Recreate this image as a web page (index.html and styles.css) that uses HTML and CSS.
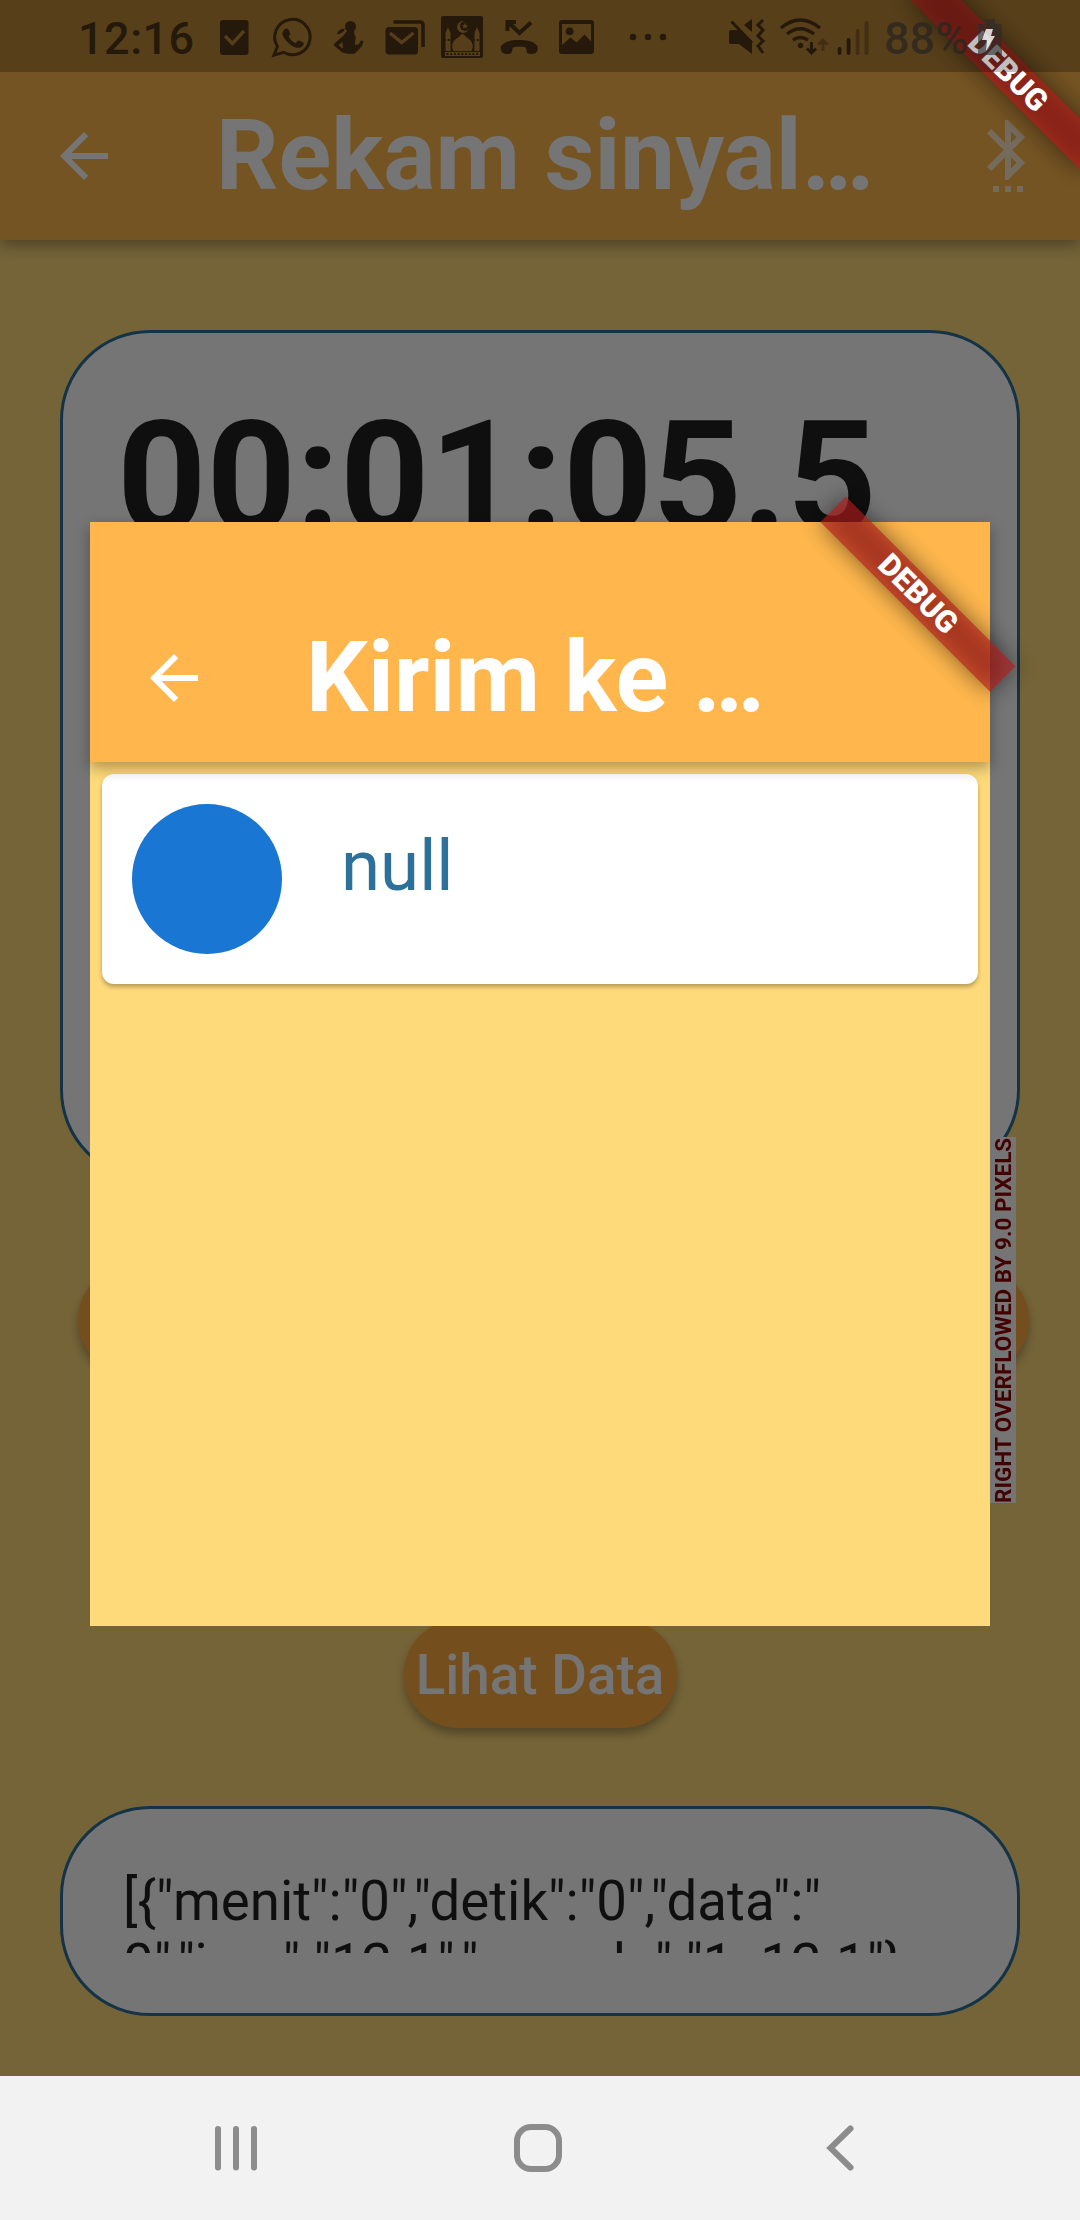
FILE: index.html
```html
<!DOCTYPE html>
<html lang="id">
<head>
<meta charset="utf-8">
<title>Rekam sinyal</title>
<link rel="stylesheet" href="styles.css">
</head>
<body>
<div class="phone">
  <main class="screen">
    <header class="appbar">
      <svg class="icon" viewBox="0 0 24 24"><path d="M20 11H7.83l5.59-5.59L12 4l-8 8 8 8 1.41-1.41L7.83 13H20v-2z"/></svg>
      <h1 class="title">Rekam sinyal…</h1>
      <svg class="icon icon-bt" viewBox="0 0 24 24"><path d="M11 24h2v-2h-2v2zm-4 0h2v-2H7v2zm8 0h2v-2h-2v2zm2.71-18.29L12 0h-1v7.59L6.41 3 5 4.41 10.59 10 5 15.59 6.41 17 11 12.41V20h1l5.71-5.71-4.3-4.29 4.3-4.29zM13 3.83l1.88 1.88L13 7.59V3.83zm1.88 10.46L13 16.17v-3.76l1.88 1.88z"/></svg>
    </header>
    <div class="content">
      <section class="panel timer">00:01:05.5</section>
      <div class="actions"><span class="pill side"></span><span class="pill side"></span></div>
      <button class="pill view">Lihat Data</button>
      <section class="panel log"><div class="log-text">[{"menit":"0","detik":"0","data":"<br>0","jam":"12.1","sample":"1: 12.1"}</div></section>
    </div>
    <div class="overflow">RIGHT OVERFLOWED BY 9.0 PIXELS</div>
    <div class="scrim"></div>

    <div class="dialog">
      <header class="dialog-bar">
        <svg class="icon" viewBox="0 0 24 24"><path d="M20 11H7.83l5.59-5.59L12 4l-8 8 8 8 1.41-1.41L7.83 13H20v-2z"/></svg>
        <h2 class="title">Kirim ke …</h2>
      </header>
      <div class="item"><span class="avatar"></span><span class="name">null</span></div>
      <div class="banner">DEBUG</div>
    </div>
    <div class="banner">DEBUG</div>

    <div class="status">
      <span class="clock">12:16</span>
      <svg width="50" height="72" viewBox="210 0 50 72"><rect x="220" y="20" width="28.500" height="35" rx="3"/><path class="cut" d="M225 36l7.500 7.500L244 31"/></svg>
      <svg width="63" height="72" viewBox="260 0 63 72"><path class="line" stroke-width="3" d="M277.500 46.500A17.700 17.700 0 1 1 283.500 52.300L274 55.200Z"/><path d="M284.500 29.500c2-1.800 3.800-.8 4.300.8l1.200 3c.3 1-.2 1.800-1.500 3.300 1.500 3 4 5.300 7.300 6.600 1.700-2.200 2.200-3 3.200-2.600l4.200 2c1 .6.500 2.200-.4 3.400-3 3-7.500 2.200-12-1-4-3-7.300-7-8.300-10.500-.4-2 .6-4 2-5z"/></svg>
      <svg width="52" height="72" viewBox="323 0 52 72"><circle cx="350.500" cy="26.500" r="5.500"/><path d="M347 31l7-1 .5 5c1.500 1.500 1.500 4 .5 7v3c3 0 5-1.500 5.500-4 .3-1 3-.8 2.800 1-1 5-5 8-8 11-1 1-3 1-5 .8-6 0-8-1-10-3l-6-5c-.8-.7-.8-1.400 0-2l9-8z"/><path d="M337 34q1-5 8-5.500-2 5.500-8 5.500z"/><path class="hole" d="M338.500 45l4-3 .5 7z"/></svg>
      <svg width="58" height="72" viewBox="375 0 58 72"><rect x="385.500" y="27" width="32.500" height="27.500" rx="3.500"/><path class="cut" d="M390 33l11.700 9.500L413.500 33"/><path class="line" stroke-width="3.600" d="M393.500 22H420q3 0 3 3v22"/></svg>
      <svg width="59" height="72" viewBox="433 0 59 72"><rect x="441" y="16" width="42" height="42" rx="2"/><g class="hole"><path d="M453.500 51c-3-6-.5-10.500 4-13l5-4.500 5 4.500c4.500 2.500 7 7 4 13z"/><path d="M445.500 51V33l2.500-6 2.500 6v18zM474.500 51V33l2.500-6 2.500 6v18z"/><path d="M445 52h35v4h-35z"/><path d="M464 21a6 6 0 1 0 4.500 8.500 5 5 0 1 1-4.500-8.500zM465 23l1 2h2l-1.500 1.500.5 2-2-1-2 1 .5-2L462 25h2z"/></g><path class="line" stroke-width="2" stroke-dasharray="2 1.700" d="M446.500 54h32M444 40h8m21 0h8"/></svg>
      <svg width="56" height="72" viewBox="492 0 56 72"><path class="line" stroke-width="4" d="M508 22l11.500 11L531 22.500M507.500 31v-9H516"/><path d="M502 52c-1.500-1-1.500-5-1-6 3-4 9-6 18.300-6s15.200 2 18 6c.7 2 .5 5-1 6.500-2 2-7 1.500-8.500 1-1.300-.6-1.500-5-2-6-4-1.200-9-1.200-13 0-.6 1-.5 5.400-2 6-2.500.9-7 .9-8.800-1.500z"/></svg>
      <svg width="67" height="72" viewBox="548 0 67 72"><path fill-rule="evenodd" d="M562 20h29q3 0 3 3v28q0 3-3 3h-29q-3 0-3-3V23q0-3 3-3zM562 24v21l8.500-7.500 6 5 8-8 6.500 7V24z"/><circle cx="569.700" cy="31.300" r="3.900"/></svg>
      <svg class="dots" width="75" height="72" viewBox="615 0 75 72"><circle cx="633" cy="37" r="3.200"/><circle cx="648" cy="37" r="3.200"/><circle cx="663" cy="37" r="3.200"/></svg>
      <svg width="57" height="72" viewBox="715 0 57 72"><path d="M731 30h8l13 11v13L739 44h-8q-2 0-2-2V32q0-2 2-2zM744 25l8-6v13z"/><path class="line" stroke-width="3" d="M731.500 21.500L752 43M763 20l-5 5 5 5-5 6 5 5-5 5 5 7"/></svg>
      <svg width="60" height="72" viewBox="772 0 60 72"><g class="line" stroke-width="3.400"><path d="M781 28q19-16 39 0M787 34q13-10.500 27 0M793 40q7-5 15 0"/><path stroke-width="3" d="M811.500 42v11M807 48.500l4.500 4.500 4.500-4.500"/><path class="dim" stroke-width="3" d="M823 51V40m-4.500 4.500L823 40l4.500 4.500"/></g><circle cx="800.500" cy="45.500" r="2.700"/></svg>
      <svg width="48" height="72" viewBox="832 0 48 72"><g class="line" stroke-width="3.800" stroke-linecap="round"><path d="M839.500 49v4M848.600 40v13"/><path class="dim" d="M857.600 31v22M866.500 23v30"/></g></svg>
      <span class="percent">88%</span>
      <svg class="battery" width="40" height="72" viewBox="970 0 40 72"><path class="shell" d="M985 19h10v5h7v31h-24V24h7z"/><path class="bolt" d="M986 29h7l-2 7h4l-9 15 1-11h-5z"/></svg>
    </div>
  </main>

  <nav class="navbar">
    <svg width="60" height="144" viewBox="206 2076 60 144"><path d="M218 2129v38.500M236 2129v38.500M254 2129v38.500"/></svg>
    <svg width="60" height="144" viewBox="508 2076 60 144"><rect x="517" y="2127" width="42" height="42" rx="14"/></svg>
    <svg width="60" height="144" viewBox="810 2076 60 144"><path d="M850.500 2128.500l-20 19.500 20 19.500"/></svg>
  </nav>
</div>
</body>
</html>
```
FILE: styles.css
```css
* { box-sizing: border-box; }

body {
  margin: 0;
  font-family: Roboto, "Liberation Sans", sans-serif;
}

.phone {
  width: 1080px;
  height: 2220px;
  display: flex;
  flex-direction: column;
  overflow: hidden;
}

.screen {
  position: relative;
  height: 2076px;
  overflow: hidden;
  background: #ffda7a;
}

.appbar {
  position: relative;
  z-index: 1;
  display: flex;
  align-items: center;
  height: 240px;
  padding: 72px 36px 0 48px;
  background: #ffb74d;
  box-shadow: 0 6px 14px rgba(0, 0, 0, 0.32);
}

.icon {
  width: 72px;
  height: 72px;
  flex: none;
  fill: #fff;
}

.icon-bt {
  margin-left: auto;
  fill: rgba(255, 255, 255, 0.7);
}

.title {
  margin: 0 0 0 96px;
  font-size: 97.6px;
  font-weight: 700;
  line-height: 112px;
  color: #fff;
  white-space: nowrap;
}

.content {
  display: flex;
  flex-direction: column;
  padding: 90px 60px 0;
}

.panel {
  border: 3px solid #2d7099;
  border-radius: 90px;
  background: #fff;
  color: rgba(0, 0, 0, 0.87);
}

.timer {
  height: 850px;
  padding: 53px 54px;
  font-size: 156px;
  font-weight: 700;
  line-height: 183px;
  white-space: nowrap;
}

.actions {
  display: flex;
  justify-content: space-between;
  margin: 86px -9px 0 18px;
}

.pill {
  height: 108px;
  border: 0;
  border-radius: 54px;
  background: #ffaa3f;
  box-shadow: 0 6px 10px rgba(0, 0, 0, 0.3);
}

.side { width: 272px; }

.view {
  align-self: center;
  width: 273px;
  margin-top: 246px;
  padding: 2px 0 0;
  font: 500 54.8px/106px Roboto, "Liberation Sans", sans-serif;
  color: #fff;
  white-space: nowrap;
}

.log {
  height: 210px;
  margin-top: 78px;
  padding: 61px 60px 0;
}

.log-text {
  height: 83px;
  overflow: hidden;
  font-size: 54.6px;
  line-height: 63px;
  white-space: nowrap;
}

.overflow {
  position: absolute;
  left: 990px;
  top: 1137px;
  width: 26px;
  height: 366px;
  background: #fff;
  color: #900000;
  font-size: 22.5px;
  font-weight: 700;
  line-height: 26px;
  white-space: nowrap;
  writing-mode: vertical-rl;
  transform: rotate(180deg);
}

.scrim {
  position: absolute;
  inset: 0;
  z-index: 2;
  background: rgba(0, 0, 0, 0.54);
}

.dialog {
  position: absolute;
  z-index: 3;
  left: 90px;
  top: 522px;
  width: 900px;
  height: 1104px;
  background: #ffda7a;
}

.dialog-bar {
  position: relative;
  z-index: 1;
  display: flex;
  align-items: center;
  height: 240px;
  padding: 72px 48px 0;
  background: #ffb74d;
  box-shadow: 0 6px 14px rgba(0, 0, 0, 0.32);
}

.item {
  display: flex;
  height: 210px;
  margin: 12px;
  padding: 30px;
  border-radius: 12px;
  background: #fff;
  box-shadow: 0 3px 4px rgba(0, 0, 0, 0.28);
}

.avatar {
  width: 150px;
  height: 150px;
  border-radius: 50%;
  background: #1976d2;
}

.name {
  margin: 20px 0 0 59px;
  font-size: 70.8px;
  line-height: 84px;
  color: #2d7099;
}

.banner {
  position: absolute;
  z-index: 4;
  top: 84px;
  right: -120px;
  width: 240px;
  height: 36px;
  color: #fff;
  font-size: 30.6px;
  font-weight: 900;
  line-height: 36px;
  text-align: center;
  transform: rotate(45deg);
  transform-origin: 120px -84px;
}

.banner::before,
.banner::after {
  content: "";
  position: absolute;
  inset: 0;
  z-index: -1;
}

.banner::before {
  background: rgba(0, 0, 0, 0.5);
  filter: blur(12px);
}

.banner::after { background: rgba(183, 28, 28, 0.63); }

.status {
  position: absolute;
  z-index: 5;
  inset: 0 0 auto;
  display: flex;
  align-items: center;
  height: 72px;
  padding-left: 78px;
  background: rgba(0, 0, 0, 0.25);
  color: #24190a;
}

.status svg { flex: none; fill: #24190a; }
.status .line { fill: none; stroke: #24190a; }
.status .cut { fill: none; stroke: #573e1b; stroke-width: 3.4; }
.status .hole { fill: #573e1b; }
.status .dim { stroke: #432e13; }

.clock,
.percent {
  flex: none;
  font-size: 45px;
  font-weight: 500;
  line-height: 72px;
  margin-top: 5px;
}

.clock { width: 132px; letter-spacing: 0.5px; }
.dots { margin-right: 25px; }
.percent { width: 84px; margin-left: 4px; color: rgba(43, 38, 33, 0.78); }
.battery { margin-left: 2px; }
.status .shell { fill: rgba(43, 43, 43, 0.6); }
.status .bolt { fill: rgba(255, 255, 255, 0.8); }

.navbar {
  display: flex;
  justify-content: space-between;
  height: 144px;
  padding: 0 210px 0 206px;
  background: #f2f2f2;
}

.navbar svg {
  fill: none;
  stroke: #8c8c8c;
  stroke-width: 6;
  stroke-linecap: round;
}
```
